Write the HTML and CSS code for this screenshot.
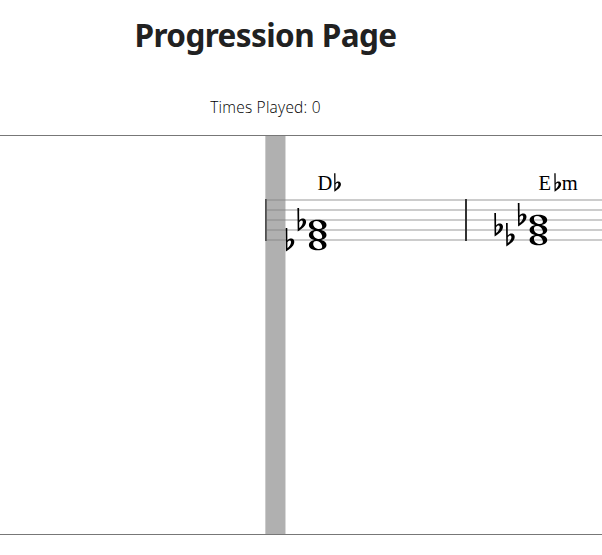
FILE: index.html
```
<!DOCTYPE html>
<html lang="en">
<head>
<meta charset="utf-8">
<title>Progression Page</title>
<link rel="stylesheet" href="styles.css">
</head>
<body>
<header class="header">
  <h1 class="title"><span>Progression Page</span></h1>
  <p class="count"><span>Times Played: 0</span></p>
</header>
<main class="stage">
  <svg class="score" width="602" height="398" viewBox="0 136 602 398">
    <defs>
      <path id="flat" fill-rule="evenodd" d="M0 0H1.7L1.8 12.4C3.2 10.6 5.2 10.1 6.9 10.8C9.2 11.9 9.2 15 7.5 17.5C5.8 20.1 2.9 21.5 .3 23.6ZM1.8 14.2V20.1C3.8 18.5 5.2 16.3 5.4 14.4C5.6 11.9 3.3 11.8 1.8 14.2Z"/>
      <path id="note" fill-rule="evenodd" d="M-8.8 0C-8.8-3.5-4.7-5.3 0-5.3S8.8-3.5 8.8 0S4.7 5.3 0 5.3S-8.8 3.5-8.8 0ZM-4.4-1.7C-5 .8-2.6 3.8 .6 4.1C3.6 4.3 4.9 3 4.4 .8C3.6-2.3 1.3-4-1.5-4C-3.2-4-4.1-3.2-4.4-1.7Z"/>
    </defs>
    <path class="staff" d="M265 200H602M265 210H602M265 220H602M265 230H602M265 240H602"/>
    <path class="bar" d="M266 199V241M466 199V241"/>
    <use href="#flat" x="297.4" y="208"/>
    <use href="#flat" x="285.6" y="228"/>
    <use href="#note" x="317.7" y="225"/>
    <use href="#note" x="317.7" y="235"/>
    <use href="#note" x="317.7" y="245"/>
    <use href="#flat" x="494.3" y="213"/>
    <use href="#flat" x="506" y="223"/>
    <use href="#flat" x="517.8" y="203"/>
    <use href="#note" x="538.4" y="220"/>
    <use href="#note" x="538.4" y="230"/>
    <use href="#note" x="538.4" y="240"/>
    <g class="chord">
      <text x="317.5" y="190">D</text>
      <text x="538.5" y="190">E</text>
      <text x="561.8" y="190">m</text>
    </g>
    <use href="#flat" transform="translate(334.1 173.2) scale(.79)"/>
    <use href="#flat" transform="translate(554.3 173.2) scale(.79)"/>
  </svg>
  <div class="playhead"></div>
</main>
</body>
</html>
```
FILE: styles.css
```
body {
  margin: 0;
  background: #fff;
  color: #212121;
  font-family: "Open Sans", "Noto Sans", sans-serif;
  overflow: hidden;
}
.header {
  width: 531px;
  height: 135px;
  text-align: center;
}
.title {
  margin: 0;
  padding-top: 14px;
  font: 700 31.5px/42px "Noto Sans", sans-serif;
  letter-spacing: -0.58px;
}
.count {
  margin: 0;
  padding-top: 39px;
  color: #000;
  font-size: 15.5px;
  font-weight: 350;
  line-height: 24px;
  letter-spacing: 0.22px;
}
.stage {
  position: relative;
  height: 398px;
  border-top: 1px solid #777;
  border-bottom: 1px solid #777;
}
.score {
  display: block;
}
.staff {
  stroke: #ccc;
  stroke-width: 2;
}
.bar {
  stroke: #333;
  stroke-width: 2;
}
.chord {
  font: 20.5px "Liberation Serif", serif;
}
.playhead {
  position: absolute;
  top: 0;
  left: 265px;
  width: 19px;
  height: 398px;
  background: rgba(128, 128, 128, 0.62);
  border-left: 1px solid rgba(128, 128, 128, 0.4);
  border-right: 1px solid rgba(128, 128, 128, 0.3);
  background-clip: padding-box;
}
```
